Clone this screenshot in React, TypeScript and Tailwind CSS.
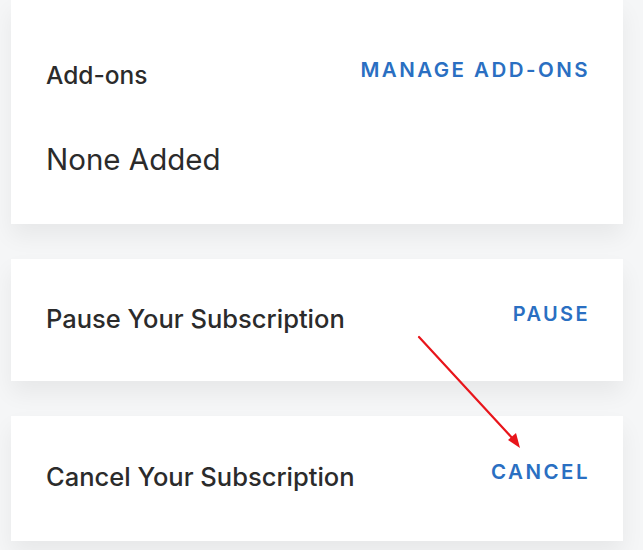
import React from "react";

const font = { fontFamily: "Inter, Roboto, 'Liberation Sans', sans-serif" };

function Card({ children, className = "" }: { children: React.ReactNode; className?: string }) {
  return (
    <div className={`bg-white shadow-[0_12px_22px_rgba(0,0,0,0.06)] pl-[35px] pr-[33px] ${className}`}>{children}</div>
  );
}

export default function App() {
  return (
    <div className="relative w-[643px] h-[550px] overflow-hidden bg-[#f5f6f7] text-[#2b2b2b]" style={font}>
      <div className="flex flex-col gap-[35px] pl-[11px] pr-[20px]">
        <Card className="h-[224px] pt-[56px]">
          <div className="flex justify-between items-start">
            <div className="text-[24.5px] font-medium leading-[38px]">Add-ons</div>
            <div className="text-[20.5px] font-semibold tracking-[0.12em] text-[#2a6fc2] leading-[28px]">MANAGE ADD-ONS</div>
          </div>
          <div className="mt-[47px] text-[29.5px] font-normal leading-[36px]">None Added</div>
        </Card>
        <Card className="h-[122px] flex items-center justify-between">
          <div className="text-[25.5px] font-medium mt-[-2px]">Pause Your Subscription</div>
          <div className="text-[20px] font-semibold tracking-[0.12em] text-[#2a6fc2] mb-[12px]">PAUSE</div>
        </Card>
        <Card className="h-[125px] flex items-center justify-between">
          <div className="text-[25.5px] font-medium mt-[-2px]">Cancel Your Subscription</div>
          <div className="text-[20.5px] font-semibold tracking-[0.12em] text-[#2a6fc2] mb-[12px]">CANCEL</div>
        </Card>
      </div>
      <svg className="absolute left-0 top-0 pointer-events-none" width="643" height="550">
        <line x1="419" y1="337" x2="514" y2="440" stroke="#e8151b" strokeWidth="2.2" strokeLinecap="round" />
        <polygon points="520,448 508,440 516,433" fill="#e8151b" />
      </svg>
    </div>
  );
}
